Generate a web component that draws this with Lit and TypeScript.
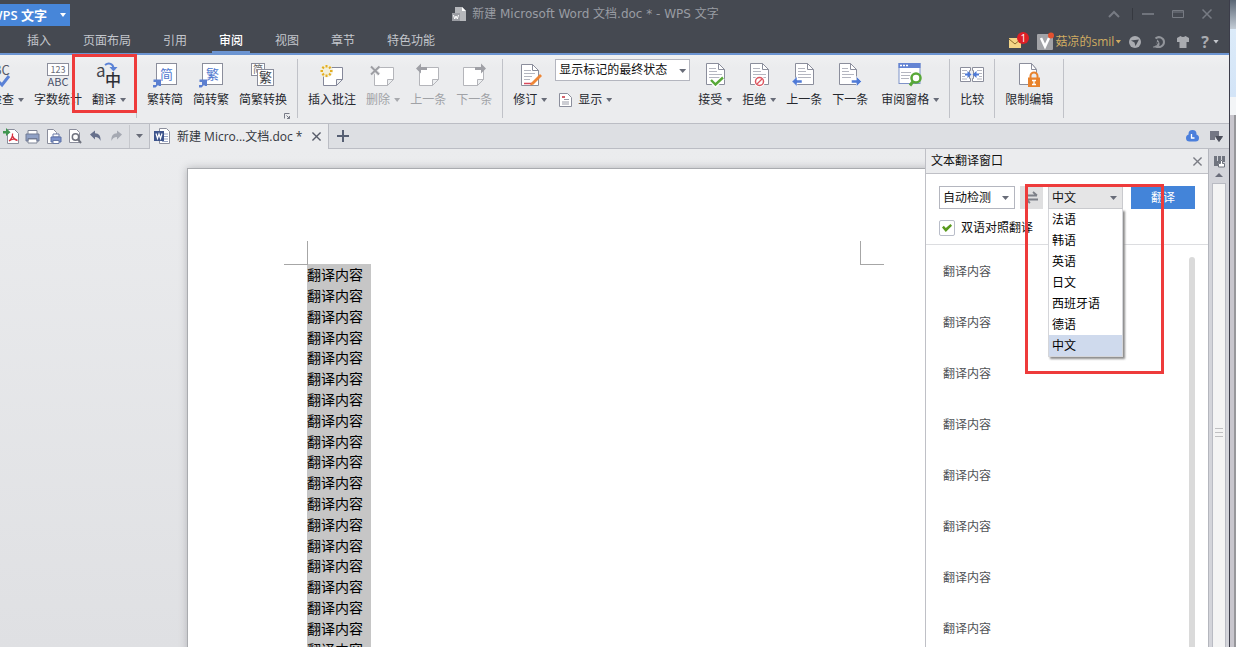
import { LitElement, html, svg, css } from "lit";
import { customElement } from "lit/decorators.js";
import { classMap } from "lit/directives/class-map.js";

const page = (fold = "#fff") => svg`
  <path d="M3.5 1.5h12l6 6v15h-18z" fill="#fff" stroke="#8b8e9c"/>
  <path d="M15.500 1.500v6h6z" fill=${fold} stroke="#8b8e9c" stroke-linejoin="round"/>`;
const lines = svg`<path d="M6 6.500h7M6 9.500h8M6 12.500h13M6 15.500h13" stroke="#b4b6c0"/>`;
const note = (color: string) => svg`
  <path d="M3.500 5.500h19v12l-6 6h-13z" fill="#fff" stroke=${color}/>
  <path d="M16.500 23.500v-6h6z" fill="#eceef0" stroke=${color}/>`;

const icons: Record<string, unknown> = {
  spell: svg`<text x="2" y="13" font-size="13" fill="#555a68">ABC</text>
    <path d="M14 18l5 5 7-9" fill="none" stroke="#5b82d6" stroke-width="3"/>`,
  count: svg`<rect x="1.500" y="1.500" width="21" height="12" fill="#fff" stroke="#8b8e9c"/>
    <text x="12" y="11" font-size="9" text-anchor="middle" fill="#6a6d7a">123</text>
    <text x="12" y="24" font-size="11" text-anchor="middle" fill="#4a506a">ABC</text>`,
  translate: svg`<text x="-1" y="15" font-size="17" fill="#43454c">a</text>
    <text x="8" y="24" font-size="16" font-weight="500" fill="#2d2f35">中</text>
    <path d="M8 3c4-3 8-1 8.500 3" fill="none" stroke="#5b82d6" stroke-width="2"/>
    <path d="M12.500 5h8l-4 4.500z" fill="#5b82d6"/>`,
  toSimple: svg`<rect x="3.500" y="1.500" width="20" height="21" fill="#fff" stroke="#8b8e9c"/>
    <text x="7" y="17" font-size="13" fill="#5078cf">简</text>
    <path d="M0 23h3v-3h-2.500v-2.500h7.500v6.500h-2l-1-1-2.500 2.500h-2.500z" fill="#5b7fd0"/>`,
  toTrad: svg`<rect x="3.500" y="1.500" width="20" height="21" fill="#fff" stroke="#8b8e9c"/>
    <text x="7" y="17" font-size="13" fill="#5078cf">繁</text>
    <path d="M0 23h3v-3h-2.500v-2.500h7.500v6.500h-2l-1-1-2.500 2.500h-2.500z" fill="#5b7fd0"/>`,
  convert: svg`<rect x=".5" y="1.500" width="13" height="12" fill="#fff" stroke="#8b8e9c"/>
    <text x="2" y="11" font-size="10" fill="#666">简</text>
    <rect x="6.500" y="7.500" width="16" height="16" fill="#fff" stroke="#8b8e9c"/>
    <text x="8" y="20" font-size="13" fill="#3c3e45">繁</text>`,
  addNote: svg`${note("#85889a")}<circle cx="6.500" cy="9" r="6.500" fill="#f3f0dc"/>
    <g stroke="#e3ad22" stroke-width="2"><path d="M6.500 3v2.500M6.500 12.500V15M.5 9H3M10 9h2.500M2.300 4.800l1.700 1.700M9 11.500l1.700 1.700M2.300 13.200l1.700-1.700M9 6.500l1.700-1.700"/></g>`,
  delNote: svg`${note("#b4b5ba")}<path d="M0 4.500l8 8M8 4.500l-8 8" stroke="#ebecee" stroke-width="4"/><path d="M0 4.500l8 8M8.500 4.500l-8.500 8" stroke="#9d9ea3" stroke-width="2"/>`,
  prevNote: svg`${note("#b4b5ba")}<path d="M0 6.500l5-5V5h6v3H5v3.500z" fill="#9fa0a6"/>`,
  nextNote: svg`<path d="M1.500 5.500h20v12l-6 6h-14z" fill="#fff" stroke="#b4b5ba"/>
    <path d="M15.500 23.500v-6h6z" fill="#eceef0" stroke="#b4b5ba"/>
    <path d="M24 6.500l-5-5V5h-6v3h6v3.500z" fill="#9fa0a6"/>`,
  revise: svg`<path d="M3.500 2.500h11l6 6v15h-17z" fill="#fff" stroke="#8b8e9c"/>
    <path d="M14.500 2.500v6h6z" fill="#fff" stroke="#8b8e9c"/>
    <path d="M6 8.500h7M6 11.500h11M6 14.500h8M6 17.500h6" stroke="#b4b6c0"/>
    <path d="M6 21.500h8" stroke="#d8475a" stroke-width="1.500"/>
    <path d="M13 21l9-9 2 2-8.500 8.500-3.500 1z" fill="#ee8636"/>`,
  accept: svg`${page()}${lines}<path d="M8 18l4.500 4.500 7.500-7" fill="none" stroke="#fff" stroke-width="5"/>
    <path d="M8 18l4.500 4.500 7.500-7" fill="none" stroke="#58a838" stroke-width="2.400"/>`,
  reject: svg`${page()}${lines}<circle cx="12.500" cy="19.500" r="5.500" fill="#fff"/>
    <circle cx="12.500" cy="19.500" r="4" fill="none" stroke="#dc5560" stroke-width="1.500"/><path d="M10 22l5-5" stroke="#dc5560" stroke-width="1.300"/>`,
  prev: svg`<g>${page()}${lines}</g><path d="M0 19.500l5-5v3.500h5v3h-5v3.500z" fill="#4f7ad6" stroke="#fff" stroke-width=".5"/>`,
  next: svg`<path d="M1.500 1.500h11l6 6v15h-17z" fill="#fff" stroke="#8b8e9c"/><path d="M12.500 1.500v6h6z" fill="#fff" stroke="#8b8e9c"/>
    <path d="M4 6.500h6M4 9.500h7M4 12.500h12M4 15.500h9" stroke="#b4b6c0"/>
    <path d="M23.500 19.500l-5-5v3.500h-5v3h5v3.500z" fill="#4f7ad6" stroke="#fff" stroke-width=".5"/>`,
  pane: svg`<rect x="1" y="1.500" width="21" height="20" fill="#fff" stroke="#7f93c9"/><path d="M.5 1h22v5H.5z" fill="#6484d3"/>
    <path d="M2 3.500h2M5 3.500h2M8 3.500h2" stroke="#fff" stroke-width="1.500"/>
    <path d="M3 10.500h10M3 13.500h9M3 16.500h8" stroke="#b4b6c0"/>
    <circle cx="18" cy="16" r="4.500" fill="#fff" stroke="#58a838" stroke-width="2.500"/><path d="M15 19.500l-3 4" stroke="#58a838" stroke-width="3"/>`,
  compare: svg`<path d="M.5 5.500h10v3h-1v8h1v3h-10zM12.500 5.500h11v14h-11v-3h1v-8h-1z" fill="#fff" stroke="#8b8e9c"/>
    <path d="M2 8.500h5M2 11.500h3M2 14.500h3M2 17h5M17 8.500h5M19 11.500h3M19 14.500h3M17 17h5" stroke="#b4b6c0"/>
    <path d="M5 11.500h2.500V9l4 3.500-4 3.500v-2.500H5zM19 11.500h-2.500V9l-4 3.500 4 3.500v-2.500H19z" fill="#4f7ad6"/>`,
  restrict: svg`<path d="M2.500 1.500h12l5 6v15h-17z" fill="#fff" stroke="#8b8e9c"/><path d="M14.500 1.500v6h5z" fill="#fff" stroke="#8b8e9c"/>
    <path d="M13.500 17v-3a3.500 3.500 0 0 1 7 0v3" fill="#ebecee" stroke="#e8822c" stroke-width="2"/>
    <rect x="11" y="15.500" width="12" height="9.500" fill="#e8822c"/><path d="M15 18.500h4M17 18.500v4M15 22.500h4" stroke="#fff" stroke-width="1.300"/>`,
};

const quick: [string, unknown][] = [
  ["输出为PDF", svg`<path d="M4.500 1.500h7l4 4v10h-11z" fill="#fff" stroke="#8b8e9c"/><path d="M6 13c2-1 4-5 3.500-7.500M9.500 8c1 3 3 4 5 4.500M6 13c3-2.500 6-2 8-1" fill="none" stroke="#d8303e" stroke-width="1.300"/><path d="M0 3h3V0l4.500 4.200L3 8V5.500H0z" fill="#3f9650"/>`],
  ["打印", svg`<path d="M4 2.500h9v4H4zM4 11h9v4H4z" fill="#fff" stroke="#7f8596"/><path d="M2 6h13v7h-2v-2.500H4V13H2z" fill="#8fa0c4" stroke="#707a94"/>`],
  ["直接打印", svg`<path d="M2.500 1.500h6l3 3v11h-9z" fill="#fff" stroke="#8b8e9c"/><path d="M8 6h6v3H8z" fill="#fff" stroke="#6878a4"/><path d="M6 9h10v5H6z" fill="#7c93cc" stroke="#5c70a6"/><path d="M8 12.500h6v3H8z" fill="#fff" stroke="#6878a4"/>`],
  ["打印预览", svg`<path d="M3.500 1.500h7l3 3v10h-10z" fill="#fff" stroke="#8b8e9c"/><circle cx="9.500" cy="9" r="3.200" fill="#fff" stroke="#70737f" stroke-width="1.500"/><path d="M12 11.500l3 3.500" stroke="#70737f" stroke-width="2"/>`],
  ["撤销", svg`<path d="M3 6.500L8 2.500v2.700c4 0 6 3 5.500 7.800-1-2.700-2.500-4-5.500-4v2.500z" fill="#66708c"/>`],
  ["恢复", svg`<path d="M14 6.500L9 2.500v2.700c-4 0-6 3-5.500 7.800 1-2.700 2.500-4 5.500-4v2.500z" fill="#a5a9b2"/>`],
];

const tabs = ["插入", "页面布局", "引用", "审阅", "视图", "章节", "特色功能"];
const languages = ["法语", "韩语", "英语", "日文", "西班牙语", "德语", "中文"];
const content = "翻译内容";

@customElement("app-root")
export class AppRoot extends LitElement {
  static styles = css`
    :host {
      display: flex;
      height: 100vh;
      overflow: hidden;
      font: 12px/18px "Open Sans", "Noto Sans CJK SC", sans-serif;
      color: #26282e;
      background: #ebecee;
    }
    * { box-sizing: border-box; }
    button, select {
      font: inherit; color: inherit; background: none; border: 0; padding: 0; margin: 0;
      appearance: none; white-space: nowrap; border-radius: 0;
    }
    svg { display: block; overflow: visible; flex: none; }
    ul { list-style: none; margin: 0; padding: 0; }
    .cjk { font-family: "Noto Sans CJK SC", sans-serif; }
    .caret { flex: none; width: 6px; height: 4px; background: #686c78; clip-path: polygon(0 0, 100% 0, 50% 100%); }
    .window { flex: 1; min-width: 0; display: flex; flex-direction: column; }

    .title { display: flex; height: 27px; background: #454951; color: #999ca3; }
    .brand {
      display: flex; align-items: center; justify-content: flex-end; gap: 13px; width: 70px; height: 22px;
      margin-top: 4px; padding-right: 4px; background: #4786d9; color: #fff; font-size: 13px; font-weight: 600; overflow: hidden;
    }
    .brand .caret { background: #fff; }
    .name { flex: 1; display: flex; justify-content: center; align-items: center; gap: 6px; font-family: "DejaVu Sans", "Noto Sans CJK SC", sans-serif; }
    .controls { display: flex; align-items: center; gap: 18px; width: 128px; padding-left: 7px; }
    .controls .minimize { border-left: 1px solid #363940; padding-left: 9px; margin-left: -6px; }

    .menu { display: flex; align-items: stretch; justify-content: space-between; height: 28px; background: #454951; border-bottom: 2px solid #6c95d2; color: #c3c6cc; }
    .tabs { display: flex; gap: 18px; padding-left: 20px; }
    .tab { padding: 4px 7px 0; border-bottom: 2px solid transparent; }
    .tab.active { color: #fff; font-weight: 500; border-color: #6c95d2; }
    .account { display: flex; align-items: center; gap: 12px; padding: 3px 10px 0 0; }
    .mail { position: relative; }
    .badge { position: absolute; left: 8px; top: -4px; width: 12px; height: 12px; border-radius: 6px; background: #dd1f26; color: #fff; font-size: 10px; line-height: 12px; text-align: center; }
    .user { display: flex; align-items: center; gap: 2px; color: #d0ac62; margin: 0 -4px 0 4px; }
    .user .caret { background: #d0ac62; margin-left: -1px; }
    .help { display: flex; align-items: center; gap: 4px; font-size: 16px; font-weight: 700; color: #a9abb0; }
    .help .caret { background: #c3c6cc; }

    .ribbon { display: flex; padding: 4px 0 5px; border-bottom: 1px solid #bbbdc4; background: linear-gradient(#f0f1f2, #ebecee 12px); }
    .group { position: relative; display: flex; gap: 10px; height: 59px; padding: 0 10px; border-right: 1px solid #c0c2c8; flex: none; }
    .group.first { margin-left: -44px; }
    .tool { position: relative; display: flex; flex-direction: column; align-items: center; gap: 1px; padding-top: 3px; height: 59px; }
    .tool.pane { margin-left: 3px; }
    .tool:disabled { color: #a0a2a6; }
    .tool:disabled .caret { background: #a8aaae; }
    .label { display: flex; align-items: center; gap: 4px; }
    .launcher { position: absolute; right: 7px; bottom: -1px; }
    .stack { display: flex; flex-direction: column; gap: 10px; margin: 0 -2px; width: 135px; }
    .show { display: flex; align-items: center; gap: 6px; padding-left: 4px; }
    .show .caret { margin-left: -2px; }
    .select { position: relative; display: flex; }
    .select select { flex: 1; width: 100%; height: 22px; padding-left: 3px; background: #fff; border: 1px solid #b4b6bf; color: #111; }
    .select .caret { position: absolute; right: 4px; top: 10px; width: 7px; }

    .docs { display: flex; height: 25px; background: #dddfe3; border-bottom: 1px solid #bbbdc4; }
    .quick { display: flex; align-items: center; gap: 4px; padding: 0 6px 0 3px; border-right: 1px solid #bbbdc4; }
    .quick .more { height: 23px; padding-left: 6px; border-left: 1px solid #c6c8cd; display: flex; align-items: center; }
    .quick .more .caret { width: 7px; }
    .doc { display: flex; align-items: center; gap: 6px; height: 25px; width: 179px; padding: 0 7px 0 4px; background: #ebecee; border-right: 1px solid #bbbdc4; color: #33363d; }
    .doc .text { flex: 1; white-space: nowrap; padding-top: 1px; }
    .plus { padding: 0 8px; }
    .cloud { margin-left: auto; padding-right: 11px; }
    .docs .list { padding-right: 6px; }

    .body { flex: 1; min-height: 0; display: flex; }
    .workspace { flex: 1; min-width: 0; overflow: hidden; padding: 19px 0 0 187px; background: linear-gradient(#ebecee, #dfe0e3); }
    .paper { width: 794px; min-height: 1123px; padding: 72px 96px; background: #fff; border: 1px solid #a9abaf; box-shadow: 0 0 8px #b4b5b9; }
    .marks { display: flex; justify-content: space-between; }
    .mark { width: 24px; height: 24px; border: solid #a6a6a6; border-width: 0 0 1px 1px; }
    .mark.left { border-width: 0 1px 1px 0; }
    .text-body { margin: -1px 0 0 23px; width: 64px; background: #c6c6c6; color: #000; font-family: "Noto Sans CJK SC", sans-serif; font-size: 14px; }
    .text-body p { margin: 0; line-height: 21px; }
    .text-body p:nth-child(5n + 4) { line-height: 20px; }

    .panel { width: 283px; display: flex; flex-direction: column; background: #fff; border-left: 1px solid #bfc0c6; }
    .panel header { display: flex; align-items: center; justify-content: space-between; height: 25px; padding: 0 6px 0 5px; background: #ebecee; border-bottom: 1px solid #bfc0c6; }
    .panel h2 { margin: 0; font-size: 12px; font-weight: 400; color: #111; }
    .form { padding: 12px 13px 6px; border-bottom: 1px solid #dcdde0; }
    .row { display: flex; }
    .row .from { width: 76px; }
    .row .to { width: 75px; margin-left: 5px; }
    .row .select select { height: 23px; }
    .row .to select { background: #e5e5e6; border-color: #c9cace; }
    .row .caret { right: 6px; }
    .swap { width: 23px; height: 23px; margin-left: 5px; padding: 5px; background: #dfdfe0; }
    .go { flex: 1; height: 23px; margin-left: 8px; background: #4384d9; color: #fff; }
    .options { position: absolute; z-index: 1; top: 23px; left: 0; width: 75px; background: #fff; color: #000; border: 1px solid #d5d6da; border-top: 0; box-shadow: 2px 2px 2px #8c8c8c; }
    .options li { padding: 2px 3px 1px; }
    .options li.selected { background: #cfdaed; }
    .both { display: flex; align-items: center; gap: 6px; margin-top: 9px; height: 20px; color: #111; }
    .both input { appearance: none; width: 16px; height: 16px; margin: 0; border: 1px solid #b9bdc9; border-radius: 2px; background: #fff; display: grid; place-items: center; }
    .both input:checked::before { content: ""; width: 10px; height: 8px; background: #5a9a1e; clip-path: polygon(0 45%, 18% 22%, 38% 50%, 85% 0, 100% 22%, 38% 100%); }
    .results { flex: 1; min-height: 0; display: flex; justify-content: space-between; overflow: hidden; padding: 0 13px 0 17px; color: #505256; }
    .results li { line-height: 51px; font-family: "Noto Sans CJK SC", sans-serif; }
    .thumb { width: 6px; margin-top: 12px; border-radius: 3px 3px 0 0; background: #dadada; }
    .frame { position: absolute; z-index: 2; border: 3px solid #ee3b3b; pointer-events: none; }
    .frame.tool-frame { top: -5px; left: -20px; width: 65px; height: 59px; }
    .frame.list-frame { top: -2px; left: -23px; width: 139px; height: 190px; }

    .rail { width: 21px; display: flex; flex-direction: column; align-items: center; background: #d3d4da; border-left: 1px solid #b4b6bd; padding-top: 7px; }
    .rail .up { margin: 6px 0; width: 8px; height: 4px; background: #6a6d7a; clip-path: polygon(50% 0, 100% 100%, 0 100%); }
    .track { flex: 1; width: 14px; display: flex; flex-direction: column; align-items: center; justify-content: center; gap: 3px; background: #f4f4f4; border: 1px solid #b9bbc3; border-bottom: 0; padding-top: 34px; }
    .grip { width: 8px; height: 1px; background: #c0c0c2; }
    .edge { width: 7px; display: flex; flex-direction: column; border-left: 1px solid #3c3d4a; }
    .edge .cap { height: 29px; background: linear-gradient(#5a6674, #c3ccd6); }
    .edge .sky { height: 68px; background: linear-gradient(#dcebf9, #d3e4f7); }
    .edge .gap { height: 18px; background: #f3f5f7; }
    .edge .bar { flex: 1; background: #c8c6cd; border-right: 2px solid #97979b; }
  `;

  private tool(icon: string, label: string, arrow = false, disabled = false, extra: unknown = "") {
    return html`<button class=${classMap({ tool: true, pane: icon === "pane" })} ?disabled=${disabled}>
      <svg width="24" height="28" class="cjk" aria-hidden="true">${icons[icon]}</svg>
      <span class="label">${label}${arrow ? html`<i class="caret"></i>` : ""}</span>${extra}
    </button>`;
  }

  private cross(size: number, color: string) {
    return html`<svg width=${size} height=${size} viewBox="0 0 10 10"><path d="M.5.5l9 9M9.500.5l-9 9" stroke=${color} stroke-width="1.500"/></svg>`;
  }

  render() {
    return html`
      <div class="window">
        <div class="title">
          <button class="brand">WPS 文字<i class="caret"></i></button>
          <div class="name">
            <svg width="14" height="14"><path d="M3 0h7l4 4v10H3z" fill="#b5b7bb"/><path d="M10 0v4h4z" fill="#fff"/><path d="M0 6h8v8H0z" fill="#9b9da3"/><path d="M1.500 8l1.200 4L4 9l1.300 3 1.200-4" fill="none" stroke="#fff"/></svg>
            <span>新建 Microsoft Word 文档.doc * - WPS 文字</span>
          </div>
          <div class="controls">
            <button aria-label="折叠功能区"><svg width="12" height="6"><path d="M1 6l5-5 5 5" fill="none" stroke="#777b83" stroke-width="2"/></svg></button>
            <button class="minimize" aria-label="最小化"><svg width="12" height="12"><path d="M0 6h12" stroke="#70747c" stroke-width="2"/></svg></button>
            <button aria-label="还原"><svg width="12" height="8"><path d="M.5.5h11v7H.5zM0 2h12" fill="none" stroke="#777b83"/></svg></button>
            <button aria-label="关闭">${this.cross(10, "#777b83")}</button>
          </div>
        </div>

        <div class="menu">
          <nav class="tabs">
            ${tabs.map((t) => html`<button class=${classMap({ tab: true, active: t === "审阅" })}>${t}</button>`)}
          </nav>
          <div class="account">
            <button class="mail" aria-label="消息">
              <svg width="12" height="12"><path d="M0 2h12v10H0z" fill="#f4d586"/><path d="M0 3l6 5 6-5" fill="none" stroke="#8a6a2c"/></svg>
              <span class="badge">1</span>
            </button>
            <button class="user">
              <svg width="16" height="16"><rect width="16" height="16" rx="1" fill="#a2a3a7"/><path d="M4 4l4 8.500L12 4" fill="none" stroke="#fff" stroke-width="2.500"/><circle cx="14" cy="1.500" r="3" fill="#e2512f"/></svg>
              菇凉的smil<i class="caret"></i>
            </button>
            <button aria-label="在线模板"><svg width="12" height="12"><circle cx="6" cy="6" r="6" fill="#a9abb0"/><path d="M2 4.500L10 3.500 6.500 10 5.500 6.500z" fill="#454951"/></svg></button>
            <button aria-label="云服务"><svg width="12" height="12"><path d="M2.500 2.500C6-.5 11 2 11 6s-4.500 6-8 4.500" fill="none" stroke="#92959b" stroke-width="2"/><path d="M0 10.500c3 0 4-2.500 4-7 3 2 3.500 6 1 8H0z" fill="#92959b"/><path d="M3 9.500L5 6" stroke="#454951"/></svg></button>
            <button aria-label="皮肤"><svg width="12" height="12"><path d="M3.500 0Q6 2 8.500 0L12 2v4H9.500v6h-7V6H0V2z" fill="#a9abb0"/></svg></button>
            <button class="help" aria-label="帮助">?<i class="caret"></i></button>
          </div>
        </div>

        <div class="ribbon">
          <div class="group first">
            ${this.tool("spell", "拼写检查", true)}
            ${this.tool("count", "字数统计")}
            ${this.tool("translate", "翻译", true, false, html`<span class="frame tool-frame"></span>`)}
          </div>
          <div class="group">
            ${this.tool("toSimple", "繁转简")}
            ${this.tool("toTrad", "简转繁")}
            ${this.tool("convert", "简繁转换")}
            <button class="launcher" aria-label="更多选项"><svg width="6" height="6"><path d="M5.500.5h-5v5M2.500 2.500l3 3M5.500 3v2.500H3" fill="none" stroke="#777a86"/></svg></button>
          </div>
          <div class="group">
            ${this.tool("addNote", "插入批注")}
            ${this.tool("delNote", "删除", true, true)}
            ${this.tool("prevNote", "上一条", false, true)}
            ${this.tool("nextNote", "下一条", false, true)}
          </div>
          <div class="group">
            ${this.tool("revise", "修订", true)}
            <div class="stack">
              <div class="select">
                <select aria-label="审阅显示状态"><option>显示标记的最终状态</option></select><i class="caret"></i>
              </div>
              <button class="show">
                <svg width="13" height="14"><path d="M.5.5h8l4 4v9H.5z" fill="#fff" stroke="#8b8e9c"/><path d="M5 6.500h5M3 9h7M3 11h7" stroke="#9a9ca8"/><path d="M3 4h3" stroke="#d4626c" stroke-width="2"/></svg>
                显示<i class="caret"></i>
              </button>
            </div>
            ${this.tool("accept", "接受", true)}
            ${this.tool("reject", "拒绝", true)}
            ${this.tool("prev", "上一条")}
            ${this.tool("next", "下一条")}
            ${this.tool("pane", "审阅窗格", true)}
          </div>
          <div class="group">${this.tool("compare", "比较")}</div>
          <div class="group">${this.tool("restrict", "限制编辑")}</div>
        </div>

        <div class="docs">
          <div class="quick">
            ${quick.map(([name, icon]) => html`<button aria-label=${name}><svg width="17" height="17">${icon}</svg></button>`)}
            <button class="more" aria-label="自定义快速访问工具栏"><i class="caret"></i></button>
          </div>
          <div class="doc">
            <svg width="17" height="17"><path d="M5.500.5h7l3 3v12h-10z" fill="#fff" stroke="#8b8e9c"/><path d="M10 6h4M10 8.500h4M10 11h4M8 13.500h6" stroke="#9aa6c4"/><path d="M0 3h10v10H0z" fill="#3d548c"/><path d="M2 5.500l1.500 5L5 6l1.500 4.500L8 5.500" fill="none" stroke="#fff" stroke-width="1.200"/></svg>
            <span class="text">新建 Micro...文档.doc *</span>
            <button aria-label="关闭文档">${this.cross(9, "#565b69")}</button>
          </div>
          <button class="plus" aria-label="新建文档"><svg width="12" height="12"><path d="M6 0v12M0 6h12" stroke="#565f73" stroke-width="2"/></svg></button>
          <button class="cloud" aria-label="云文档"><svg width="13" height="12"><circle cx="6.500" cy="4" r="4" fill="#4b7fdc"/><rect y="4.500" width="13" height="7" rx="3.500" fill="#4b7fdc"/><path d="M5.500 4v4H8.500" fill="none" stroke="#fff" stroke-width="1.300"/></svg></button>
          <button class="list" aria-label="窗口列表"><svg width="13" height="11"><path d="M0 0h9v5H5v4H0z" fill="#747784"/><path d="M5.500 5.500h7l-3.500 5z" fill="#4d505c" stroke="#4d505c"/></svg></button>
        </div>

        <div class="body">
          <main class="workspace">
            <div class="paper">
              <div class="marks"><span class="mark left"></span><span class="mark"></span></div>
              <div class="text-body">${Array.from({ length: 20 }, () => html`<p>${content}</p>`)}</div>
            </div>
          </main>
          <aside class="panel">
            <header><h2>文本翻译窗口</h2><button aria-label="关闭窗格">${this.cross(9, "#7a7c84")}</button></header>
            <div class="form">
              <div class="row">
                <div class="select from"><select aria-label="源语言"><option>自动检测</option></select><i class="caret"></i></div>
                <button class="swap" aria-label="交换语言"><svg width="13" height="13"><path d="M0 4.500h12M8 1l4 3.500M1 8.500h12M5 12L1 8.500" fill="none" stroke="#7d8088" stroke-width="1.800"/></svg></button>
                <div class="select to">
                  <select aria-label="目标语言"><option>中文</option></select><i class="caret"></i>
                  <ul class="options" role="listbox">
                    ${languages.map((l) => html`<li role="option" class=${classMap({ selected: l === "中文" })}>${l}</li>`)}
                  </ul>
                  <span class="frame list-frame"></span>
                </div>
                <button class="go">翻译</button>
              </div>
              <label class="both"><input type="checkbox" checked />双语对照翻译</label>
            </div>
            <div class="results">
              <ul>${Array.from({ length: 8 }, () => html`<li>${content}</li>`)}</ul>
              <div class="thumb"></div>
            </div>
          </aside>
          <div class="rail">
            <svg width="11" height="11"><path d="M0 0h11v6H9V4H6v3H4v3H0z" fill="#70747f"/><path d="M3.500 0v5M7.500 0v4" stroke="#d3d4da"/><path d="M4.500 11V7.500h2v-3h2v3h2V11z" fill="#fff" stroke="#70747f"/></svg>
            <i class="up"></i>
            <div class="track"><i class="grip"></i><i class="grip"></i><i class="grip"></i></div>
          </div>
        </div>
      </div>
      <div class="edge"><i class="cap"></i><i class="sky"></i><i class="gap"></i><i class="bar"></i></div>
    `;
  }
}
